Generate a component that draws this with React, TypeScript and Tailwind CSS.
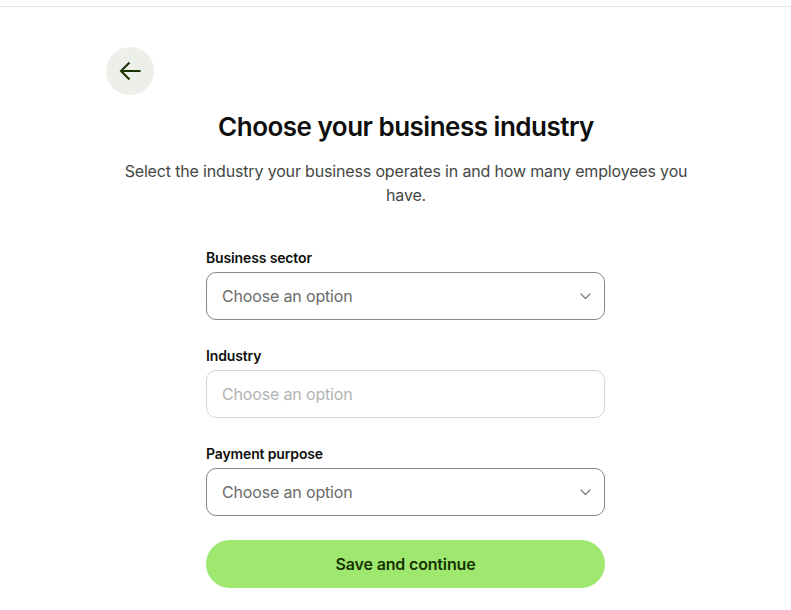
import React from 'react';

const fields = [
  { label: 'Business sector', disabled: false },
  { label: 'Industry', disabled: true },
  { label: 'Payment purpose', disabled: false },
];

function Chevron() {
  return (
    <svg width="11" height="7" viewBox="0 0 11 7" fill="none" className="text-[#7a7b79]">
      <path d="M1 1l4.5 4.5L10 1" stroke="currentColor" strokeWidth="1.2" strokeLinecap="round" strokeLinejoin="round" />
    </svg>
  );
}

export default function App() {
  return (
    <div className="min-h-[610px] bg-white font-['Inter','Liberation_Sans',sans-serif] text-[#0e0f0c]">
      <div className="h-[7px] border-b border-[#e6e6e6]" />
      <div className="ml-[106px] w-[600px] pt-[40px]">
        <button className="flex h-12 w-12 items-center justify-center rounded-full bg-[#ecefea]">
          <svg width="22" height="20" viewBox="0 0 22 20" fill="none" className="text-[#163300]">
            <path d="M21.5 10H2M10.5 1.5L2 10l8.5 8.5" stroke="currentColor" strokeWidth="2" />
          </svg>
        </button>

        <h1 className="mt-4 text-center text-[26px] font-semibold leading-8 tracking-[-0.5px]">Choose your business industry</h1>
        <p className="mx-auto mt-4 max-w-[568px] text-center text-base leading-6 tracking-[-0.01em] text-[#454745]">
          Select the industry your business operates in and how many employees you have.
        </p>

        <form className="ml-[100px] mt-[41px] w-[399px]" onSubmit={(e) => e.preventDefault()}>
          {fields.map((f) => (
            <div key={f.label} className="mb-[26px]">
              <label className="block text-sm font-semibold leading-5 tracking-[-0.01em]">{f.label}</label>
              <div
                className={`mt-1 flex h-12 items-center justify-between rounded-[10px] border pl-[15px] pr-[13px] ${
                  f.disabled ? 'border-[#d6d6d6]' : 'border-[#868685]'
                }`}
              >
                <span className={`text-base tracking-[-0.01em] ${f.disabled ? 'text-[#b3b3b3]' : 'text-[#6a6c6a]'}`}>
                  Choose an option
                </span>
                {!f.disabled && <Chevron />}
              </div>
            </div>
          ))}
          <button
            type="submit"
            className="-mt-[2px] h-12 w-full rounded-full bg-[#9fe870] text-base font-semibold tracking-[-0.01em] text-[#163300]"
          >
            Save and continue
          </button>
        </form>
      </div>
    </div>
  );
}
